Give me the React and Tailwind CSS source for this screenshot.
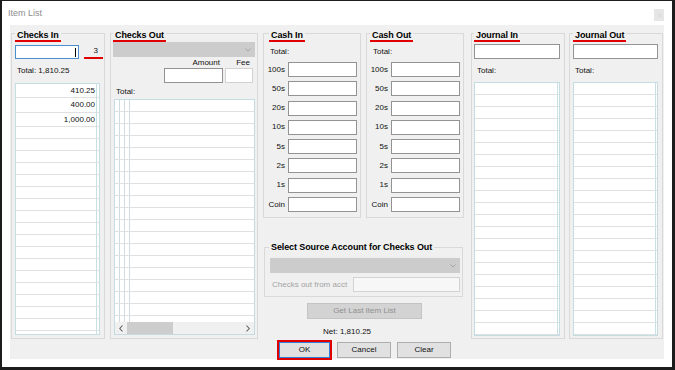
import React from 'react'

const checksInRows = ['h-[14px]', 'h-[15px]', 'h-[14px]', ...Array(18).fill('h-[12px]')]
const checksInValues = ['410.25', '400.00', '1,000.00']
const twelveRows = (n) => Array(n).fill('h-[12px]')
const cashLabels = ['100s', '50s', '20s', '10s', '5s', '2s', '1s', 'Coin']

function GroupBox({ title, titleClass, underline = true, className, children }) {
    return (
        <div className={`relative border border-[#d9d9d9] ${className}`}>
            <span
                className={`absolute ${titleClass} ${underline ? 'top-[-4px] border-b-2 border-[#e00000]' : 'top-[-6px]'} px-[2px] bg-[#f0f0f0] leading-[10px] text-[9px] font-bold text-black whitespace-nowrap tracking-[-0.1px]`}
            >
                {title}
            </span>
            {children}
        </div>
    )
}

function TextBox({ className }) {
    return <div className={`h-[15px] bg-white border border-[#939393] ${className}`} />
}

function Chevron() {
    return (
        <svg width="6" height="4" viewBox="0 0 6 4">
            <path d="M0.5 0.5 L3 3 L5.5 0.5" stroke="#a3a3a3" strokeWidth="1" fill="none" />
        </svg>
    )
}

// simple list box, one main column and a thin trailing strip
function ListBox({ className, rows, mainClass, values = [] }) {
    return (
        <div className={`border border-[#c3dde3] bg-white overflow-hidden ${className}`}>
            {rows.map((h, i) => (
                <div key={i} className={`flex border-b border-[#e0e0e0] ${h}`}>
                    <div className={`${mainClass} h-full border-r border-[#c9dfe4] flex items-center justify-end pr-[1px] text-[#111]`}>
                        {values[i]}
                    </div>
                </div>
            ))}
        </div>
    )
}

function CashBox({ title, titleClass }) {
    return (
        <GroupBox title={title} titleClass={titleClass} className="w-[98px] h-[185px]">
            <div className="mt-[12px] ml-[6px] leading-[11px]">Total:</div>
            <div className="mt-[5px] flex flex-col gap-[4.3px]">
                {cashLabels.map((label) => (
                    <div key={label} className="flex items-center h-[15px]">
                        <span className="w-[21px] text-right">{label}</span>
                        <TextBox className="ml-[3px] w-[69px]" />
                    </div>
                ))}
            </div>
        </GroupBox>
    )
}

function JournalBox({ title, titleClass, inset, listClass, mainClass }) {
    return (
        <GroupBox title={title} titleClass={titleClass} className={`${inset} mt-[8px] w-[94px] h-[306px]`}>
            <TextBox className={`mt-[10px] w-[69px] ${listClass}`} />
            <div className="mt-[6px] ml-[5px] leading-[11px]">Total:</div>
            <ListBox className={`mt-[6px] h-[254px] ${listClass}`} rows={twelveRows(22)} mainClass={mainClass} />
        </GroupBox>
    )
}

export default function App() {
    return (
        <div className="w-[675px] h-[370px] overflow-hidden bg-white border-t border-l-2 border-r-[3px] border-b-[3px] border-[#1c1c1c] flex flex-col font-['Liberation_Sans',Arial,sans-serif] text-[8px] text-[#111]">
            <div className="h-[24px] shrink-0 flex items-start justify-between pl-[6px] pr-[8px]">
                <span className="mt-[7px] leading-[11px] text-[9px] text-[#8e8e8e]">Item List</span>
                <div className="mt-[8px] w-[10px] h-[12px] bg-[#e6e6e6] flex items-center justify-center">
                    <svg width="5" height="5" viewBox="0 0 5 5">
                        <path d="M0.5 0.5 L4.5 4.5 M4.5 0.5 L0.5 4.5" stroke="#d2d2d2" strokeWidth="0.8" />
                    </svg>
                </div>
            </div>

            <div className="mx-[8px] h-[334px] shrink-0 bg-[#f0f0f0] flex items-start">
                {/* Checks In */}
                <GroupBox title="Checks In" titleClass="left-[3px]" className="ml-[1px] mt-[8px] w-[94px] h-[306px]">
                    <div className="mt-[11px] flex items-start">
                        <div className="ml-[3px] w-[64px] h-[14px] bg-white border border-[#4a90d0] flex items-center justify-end pr-[2px]">
                            <span className="w-[1px] h-[9px] bg-black" />
                        </div>
                        <span className="ml-[5px] w-[19px] h-[14px] border-b-2 border-[#e00000] text-right pr-[5px] leading-[12px]">3</span>
                    </div>
                    <div className="mt-[6px] ml-[5px] leading-[11px]">Total: 1,810.25</div>
                    <ListBox className="mt-[7px] ml-[3px] w-[85px] h-[252px]" rows={checksInRows} mainClass="w-[81px]" values={checksInValues} />
                </GroupBox>

                {/* Checks Out */}
                <GroupBox title="Checks Out" titleClass="left-[2px]" className="ml-[5px] mt-[8px] w-[148px] h-[306px]">
                    <div className="mt-[8px] ml-[2px] w-[142px] h-[15px] bg-[#cccccc] flex items-center justify-end pr-[4px]">
                        <Chevron />
                    </div>
                    <div className="mt-[1px] flex leading-[10px]">
                        <span className="ml-[53px] w-[59px] text-right pr-[3px]">Amount</span>
                        <span className="ml-[2px] w-[28px] text-right pr-[3px]">Fee</span>
                    </div>
                    <div className="flex">
                        <TextBox className="ml-[53px] w-[59px]" />
                        <div className="ml-[2px] w-[28px] h-[15px] bg-white border border-[#d2d2d2]" />
                    </div>
                    <div className="mt-[3px] ml-[5px] leading-[11px]">Total:</div>
                    <div className="mt-[2px] ml-[3px] w-[141px] h-[236px] border border-[#c3dde3] bg-white flex flex-col">
                        <div className="flex-1 overflow-hidden">
                            {twelveRows(19).map((h, i) => (
                                <div key={i} className={`flex border-b border-[#e0e0e0] ${h}`}>
                                    <div className="w-[5px] h-full border-r border-[#cfdcdf]" />
                                    <div className="w-[5px] h-full border-r border-[#cfdcdf]" />
                                    <div className="w-[5px] h-full border-r border-[#cfdcdf]" />
                                </div>
                            ))}
                        </div>
                        <div className="h-[12px] shrink-0 bg-[#f0f0f0] flex items-center">
                            <div className="w-[12px] flex justify-center">
                                <svg width="4" height="7" viewBox="0 0 4 7">
                                    <path d="M3.5 0.5 L0.8 3.5 L3.5 6.5" stroke="#606060" strokeWidth="1.1" fill="none" />
                                </svg>
                            </div>
                            <div className="w-[46px] h-full bg-[#cdcdcd]" />
                            <div className="flex-1" />
                            <div className="w-[13px] flex justify-center">
                                <svg width="4" height="7" viewBox="0 0 4 7">
                                    <path d="M0.5 0.5 L3.2 3.5 L0.5 6.5" stroke="#606060" strokeWidth="1.1" fill="none" />
                                </svg>
                            </div>
                        </div>
                    </div>
                </GroupBox>

                {/* Cash + source account + buttons */}
                <div className="ml-[5px] w-[201px] flex flex-col">
                    <div className="mt-[8px] flex gap-[5px]">
                        <CashBox title="Cash In" titleClass="left-[5px]" />
                        <CashBox title="Cash Out" titleClass="left-[3px]" />
                    </div>

                    <GroupBox title="Select Source Account for Checks Out" titleClass="left-[4px]" underline={false} className="mt-[29px] ml-[1px] w-[199px] h-[50px]">
                        <div className="mt-[10px] ml-[5px] w-[190px] h-[15px] bg-[#cccccc] flex items-center justify-end pr-[4px]">
                            <Chevron />
                        </div>
                        <div className="mt-[4px] flex items-center h-[15px]">
                            <span className="ml-[7px] w-[81px] text-[#a3a3a3] whitespace-nowrap">Checks out from acct</span>
                            <div className="w-[107px] h-[15px] bg-[#f7f7f7] border border-[#d2d2d2]" />
                        </div>
                    </GroupBox>

                    <div className="mt-[6px] ml-[44px] w-[115px] h-[16px] bg-[#d3d3d3] border border-[#c4c4c4] text-[#8f8f8f] flex items-center justify-center">
                        Get Last Item List
                    </div>
                    <div className="mt-[7px] ml-[60px] leading-[11px]">Net: 1,810.25</div>
                    <div className="mt-[3px] ml-[14px] flex items-start">
                        <div className="w-[55px] h-[20px] border-2 border-[#e00000]">
                            <div className="w-full h-full bg-[#e1e1e1] border border-[#2f7fd8] flex items-center justify-center">OK</div>
                        </div>
                        <div className="ml-[5px] mt-[2px] w-[54px] h-[16px] bg-[#e1e1e1] border border-[#adadad] flex items-center justify-center">Cancel</div>
                        <div className="ml-[6px] mt-[2px] w-[54px] h-[16px] bg-[#e1e1e1] border border-[#adadad] flex items-center justify-center">Clear</div>
                    </div>
                </div>

                <JournalBox title="Journal In" titleClass="left-[2px]" inset="ml-[7px]" listClass="ml-[2px] w-[86px]" mainClass="w-[83px]" />
                <JournalBox title="Journal Out" titleClass="left-[3px]" inset="ml-[4px]" listClass="ml-[3px] w-[85px]" mainClass="w-[82px]" />
            </div>
        </div>
    )
}
